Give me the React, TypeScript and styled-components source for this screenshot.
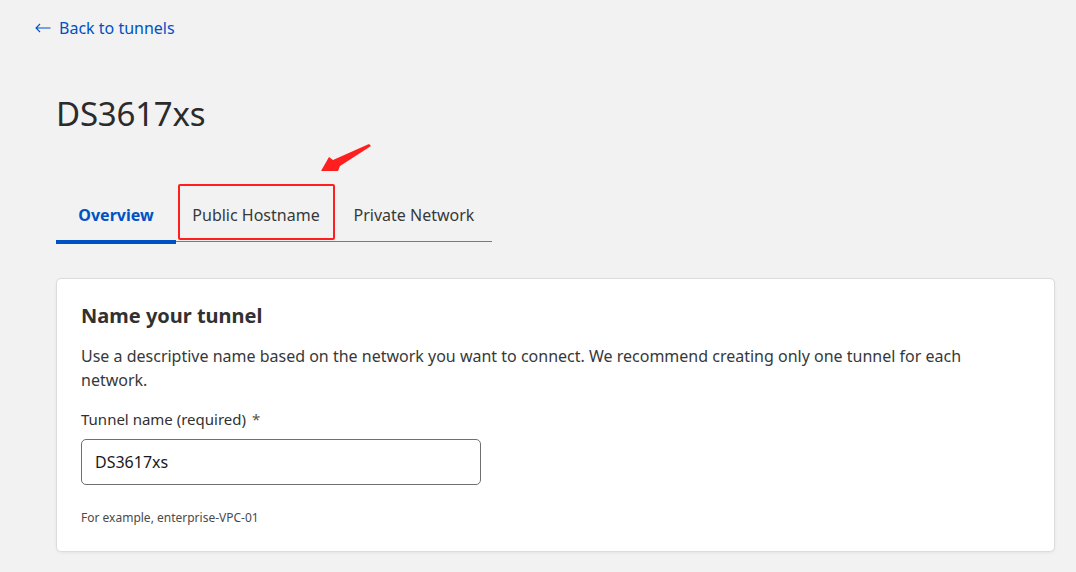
import React from "react";
import styled, { createGlobalStyle } from "styled-components";

const Global = createGlobalStyle`
  html, body { margin: 0; padding: 0; background: #f2f2f2; }
  body { font-family: "Noto Sans", "Segoe UI", sans-serif; color: #313131; }
`;

const Page = styled.div`
  width: 1076px;
  height: 572px;
  box-sizing: border-box;
  padding: 16px 21px 0 56px;
  display: flex;
  flex-direction: column;
  position: relative;
  overflow: hidden;
`;

const BackLink = styled.a`
  display: flex;
  align-items: center;
  gap: 8px;
  margin-left: -21px;
  height: 24px;
  font-size: 16px;
  color: #0051c3;
  text-decoration: none;
`;

const ArrowIcon = styled.svg`
  flex: none;
`;

const Title = styled.h1`
  margin: 54px 0 0;
  font-size: 33px;
  font-weight: 400;
  line-height: 40px;
  color: #2b2b2b;
  letter-spacing: -0.2px;
`;

const TabBar = styled.div`
  margin-top: 50px;
  display: flex;
  width: 436px;
  height: 57px;
  border-bottom: 1px solid #7a7a7a;
`;

const Tab = styled.div<{ $active?: boolean; $w: number }>`
  flex: none;
  width: ${(p) => p.$w}px;
  height: 60px;
  box-sizing: border-box;
  display: flex;
  align-items: center;
  justify-content: center;
  font-size: 16px;
  font-weight: ${(p) => (p.$active ? 700 : 400)};
  color: ${(p) => (p.$active ? "#0051c3" : "#36393a")};
  position: relative;
  border-bottom: 4px solid ${(p) => (p.$active ? "#0051c3" : "transparent")};
  padding-top: 6px;
`;

const Highlight = styled.div`
  position: absolute;
  left: 2px;
  right: 1px;
  top: 0;
  bottom: 0;
  border: 2px solid #ff1f1f;
  border-radius: 2px;
  pointer-events: none;
`;

const Pointer = styled.svg`
  position: absolute;
  left: 318px;
  top: 140px;
`;

const Card = styled.section`
  margin-top: 36px;
  background: #fff;
  border: 1px solid #dcdcdc;
  border-radius: 5px;
  box-shadow: 0 1px 3px rgba(0, 0, 0, 0.06);
  padding: 23px 24px 25px;
  display: flex;
  flex-direction: column;
`;

const CardTitle = styled.h2`
  margin: 0;
  font-size: 20px;
  font-weight: 700;
  line-height: 28px;
  color: #313131;
`;

const Desc = styled.p`
  margin: 14px 0 0;
  font-size: 16px;
  line-height: 24px;
  color: #36393a;
  max-width: 910px;
`;

const Label = styled.label`
  margin-top: 17px;
  font-size: 15px;
  line-height: 20px;
  color: #313131;
`;

const Star = styled.span`
  color: #555;
  margin-left: 6px;
`;

const Input = styled.input`
  margin-top: 10px;
  width: 400px;
  height: 46px;
  box-sizing: border-box;
  border: 1px solid #6f6f6f;
  border-radius: 5px;
  padding: 0 13px;
  font-family: inherit;
  font-size: 16px;
  color: #1a1a1a;
  background: #fff;
  outline: none;
`;

const Hint = styled.div`
  margin-top: 25px;
  font-size: 12px;
  line-height: 16px;
  color: #4a4a4a;
`;

export default function App() {
  return (
    <>
      <Global />
      <Page>
        <BackLink href="#">
          <ArrowIcon width="16" height="10" viewBox="0 0 16 10">
            <path d="M15.5 5H1M5 1L1 5l4 4" fill="none" stroke="#0051c3" strokeWidth="1.1" />
          </ArrowIcon>
          Back to tunnels
        </BackLink>
        <Title>DS3617xs</Title>
        <TabBar>
          <Tab $active $w={120}>Overview</Tab>
          <Tab $w={160}>
            Public Hostname
            <Highlight />
          </Tab>
          <Tab $w={156}>Private Network</Tab>
        </TabBar>
        <Pointer width="56" height="34" viewBox="0 0 56 34">
          <polygon points="3,31 11,17 15,20 51,4 53,6 22,26 20,31" fill="#ff1f1f" />
        </Pointer>
        <Card>
          <CardTitle>Name your tunnel</CardTitle>
          <Desc>
            Use a descriptive name based on the network you want to connect. We recommend
            creating only one tunnel for each network.
          </Desc>
          <Label>
            Tunnel name (required)<Star>*</Star>
          </Label>
          <Input defaultValue="DS3617xs" />
          <Hint>For example, enterprise-VPC-01</Hint>
        </Card>
      </Page>
    </>
  );
}
